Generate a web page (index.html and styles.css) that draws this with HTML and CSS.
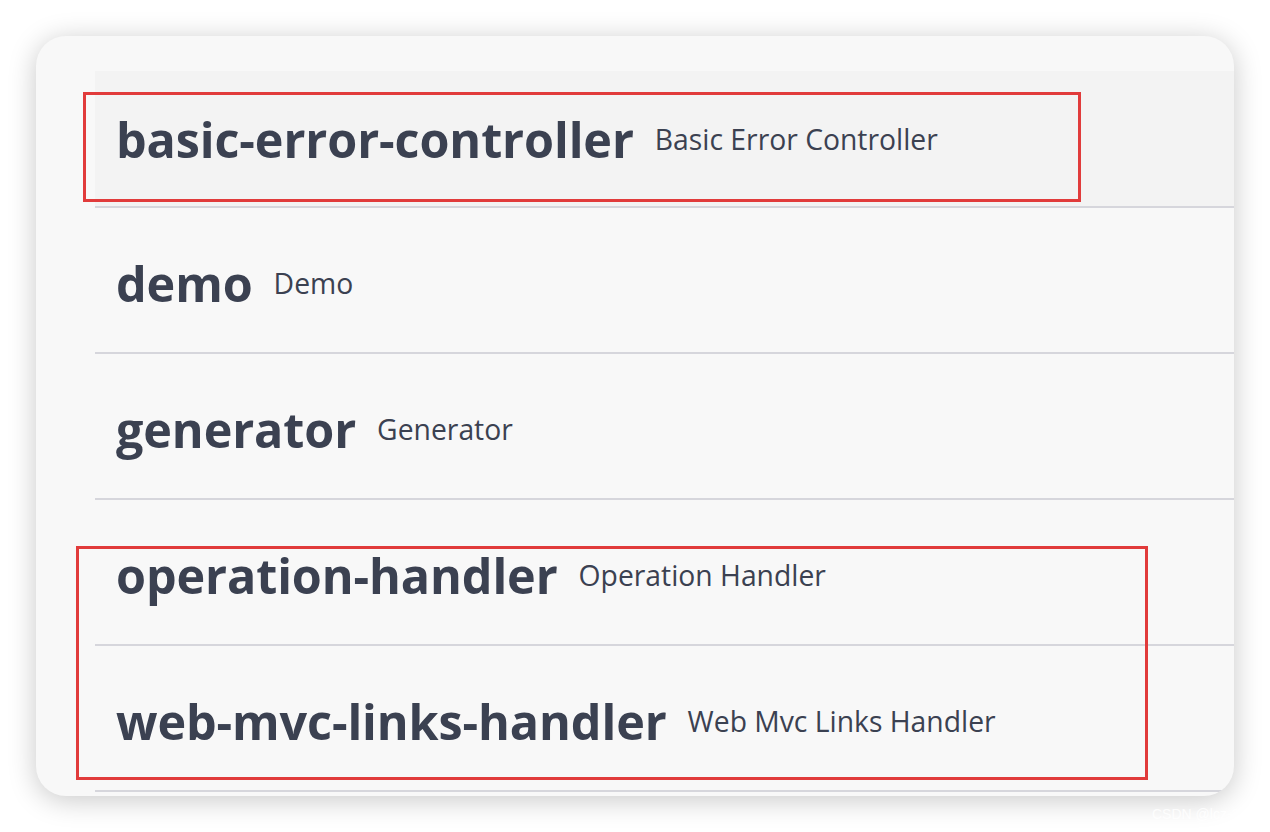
FILE: index.html
```html
<!DOCTYPE html>
<html>
<head>
<meta charset="utf-8">
<link rel="stylesheet" href="styles.css">
</head>
<body>
<div class="page">
  <div class="card">
    <div class="tags">
      <div class="tag tag-first"><span class="name">basic-error-controller</span><span class="desc">Basic Error Controller</span></div>
      <div class="tag"><span class="name">demo</span><span class="desc">Demo</span></div>
      <div class="tag"><span class="name">generator</span><span class="desc">Generator</span></div>
      <div class="tag"><span class="name">operation-handler</span><span class="desc">Operation Handler</span></div>
      <div class="tag"><span class="name">web-mvc-links-handler</span><span class="desc">Web Mvc Links Handler</span></div>
    </div>
  </div>
  <div class="mark mark-one"></div>
  <div class="mark mark-two"></div>
  <div class="watermark">CSDN @lcz-20</div>
</div>
</body>
</html>
```
FILE: styles.css
```css
html, body {
  margin: 0;
  padding: 0;
  background: #ffffff;
}
.page {
  position: relative;
  width: 1270px;
  height: 832px;
  overflow: hidden;
  padding: 36px 0 0 36px;
  box-sizing: border-box;
}
.card {
  width: 1198px;
  height: 760px;
  background: #f8f8f8;
  border-radius: 30px;
  box-shadow: 0 4px 28px rgba(0, 0, 0, 0.22);
  overflow: hidden;
  padding: 35px 0 0 59px;
  box-sizing: border-box;
}
.tags {
  display: flex;
  flex-direction: column;
}
.tag {
  display: flex;
  align-items: center;
  align-self: stretch;
  height: 146px;
  padding: 47px 0 0 21px;
  box-sizing: border-box;
  border-bottom: 2px solid #d6d6dc;
  font-family: "Open Sans", "Noto Sans", sans-serif;
  color: #3b4151;
}
.tag > span {
  align-self: flex-start;
}
.tag-first {
  height: 137px;
  background: #f3f3f3;
  padding-top: 40px;
}
.name {
  font-weight: 700;
  font-size: 48.5px;
  line-height: 56px;
  height: 56px;
  letter-spacing: -0.1px;
}
.desc {
  font-size: 28.3px;
  margin-left: 21px;
  line-height: 40px;
  margin-top: 8px;
}
.mark {
  position: absolute;
  border: 3px solid #e13b3b;
  box-sizing: border-box;
}
.mark-one {
  left: 83px;
  top: 92px;
  width: 998px;
  height: 110px;
}
.mark-two {
  left: 76px;
  top: 546px;
  width: 1072px;
  height: 234px;
}
.watermark {
  position: absolute;
  left: 1152px;
  top: 806px;
  font-family: "Liberation Sans", sans-serif;
  font-size: 14px;
  color: rgba(255, 255, 255, 0.85);
}
```
